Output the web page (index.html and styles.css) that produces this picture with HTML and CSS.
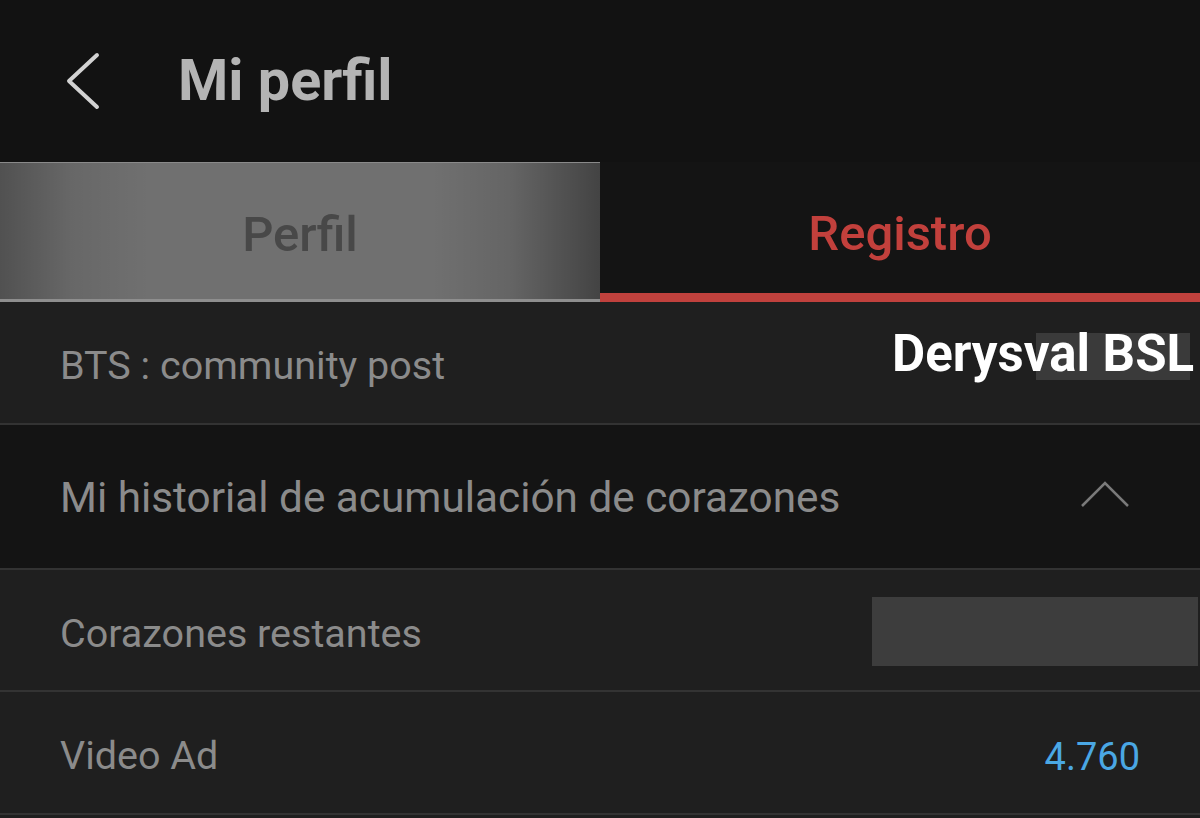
FILE: index.html
```html
<!DOCTYPE html>
<html lang="es">
<head>
<meta charset="utf-8">
<title>Mi perfil</title>
<link rel="stylesheet" href="styles.css">
</head>
<body>
<div class="screen">
  <header class="topbar">
    <svg class="back" width="40" height="60" viewBox="0 0 40 60">
      <polyline points="31,4 3,30 31,56" fill="none" stroke="#d2d2d2" stroke-width="4" stroke-linecap="round" stroke-linejoin="round"/>
    </svg>
    <h1 class="title">Mi perfil</h1>
  </header>
  <nav class="tabs">
    <div class="tab tab-off">Perfil</div>
    <div class="tab tab-on">Registro</div>
  </nav>
  <div class="row row-light">
    <span class="label">BTS : community post</span>
  </div>
  <div class="row row-dark row-tall">
    <span class="label label-lg">Mi historial de acumulación de corazones</span>
    <svg class="chev" width="50" height="28" viewBox="0 0 50 28">
      <polyline points="2,25 25,2 48,25" fill="none" stroke="#7a7a7a" stroke-width="2.5"/>
    </svg>
  </div>
  <div class="row row-light row-short">
    <span class="label">Corazones restantes</span>
    <div class="redact"></div>
  </div>
  <div class="row row-light">
    <span class="label">Video Ad</span>
    <span class="value">4.760</span>
  </div>
  <div class="watermark"><span>Derysval BSL</span></div>
</div>
</body>
</html>
```
FILE: styles.css
```css
* { box-sizing: border-box; margin: 0; padding: 0; }
html, body { width: 1200px; height: 818px; overflow: hidden; }
body { background: #1f1f1f; font-family: Roboto, "Noto Sans", sans-serif; }
.screen { position: relative; width: 1200px; height: 818px; display: flex; flex-direction: column; }

.topbar { height: 162px; background: #121212; display: flex; align-items: center; padding-left: 66px; }
.back { display: block; margin-right: 72px; }
.title { font-size: 57.5px; font-weight: 700; color: #b4b4b4; margin-top: -2px; }

.tabs { height: 140px; display: flex; }
.tab { flex: 1; display: flex; align-items: center; justify-content: center; font-size: 49px; font-weight: 500; padding-top: 6px; }
.tab-off { color: #484848; background:
  linear-gradient(90deg, rgba(0,0,0,0.28) 0%, rgba(0,0,0,0.08) 12%, rgba(0,0,0,0) 25%, rgba(0,0,0,0) 72%, rgba(0,0,0,0.1) 85%, rgba(0,0,0,0.4) 100%), #707070;
  border-top: 1px solid #8a8a8a; border-bottom: 3px solid #8e8e8e; }
.tab-on { color: #c2403c; background: #141414; border-bottom: 9px solid #c0413d; padding-top: 12px; }

.row { display: flex; align-items: center; justify-content: space-between; padding: 0 60px; border-bottom: 2px solid #333333; }
.row-light { background: #1f1f1f; height: 123px; }
.row-dark { background: #141414; }
.row-tall { height: 145px; }
.row-short { height: 122px; padding-right: 2px; }
.label { font-size: 39.5px; color: #8b8b8b; font-weight: 400; padding-top: 6px; }
.label-lg { font-size: 42.3px; padding-top: 2px; }
.chev { display: block; margin-right: 10px; margin-top: -4px; }
.redact { width: 326px; height: 69px; background: #3d3d3d; margin-top: 2px; }
.value { font-size: 38px; color: #4aa7e4; padding-top: 8px; }

.watermark { position: absolute; left: 892px; top: 322px; font-size: 51px; font-weight: 700; color: #ffffff; line-height: 64px; white-space: nowrap; }
.watermark span { position: relative; }
.watermark::before { content: ""; position: absolute; left: 144px; top: 11px; width: 154px; height: 47px; background: #3a3a3a; }
```
